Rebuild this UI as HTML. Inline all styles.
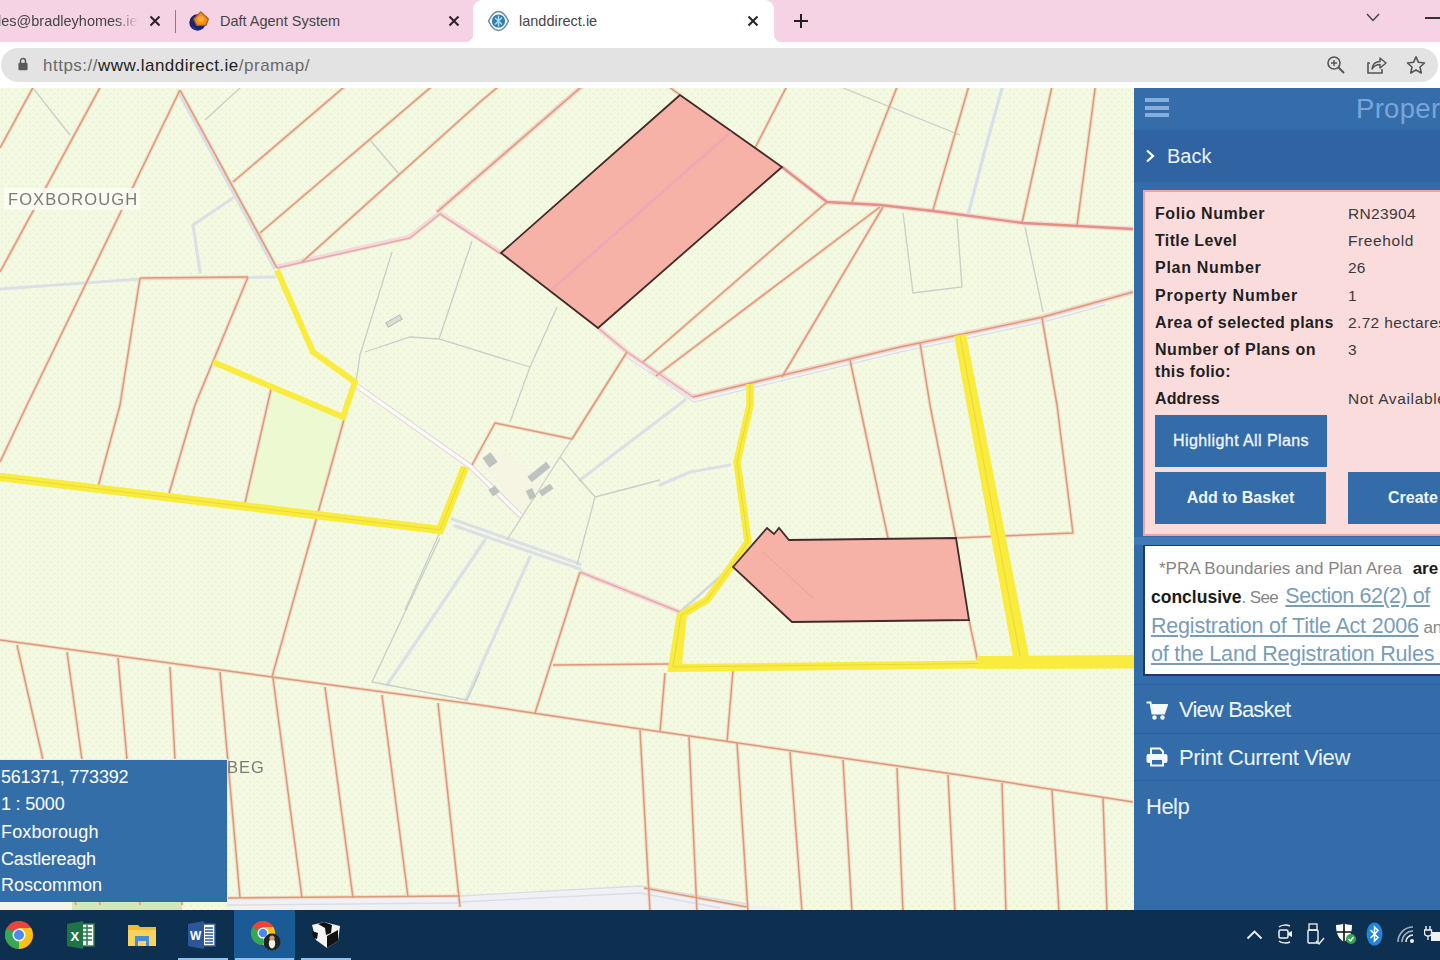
<!DOCTYPE html>
<html lang="en">
<head>
<meta charset="utf-8">
<title>landdirect.ie</title>
<style>
*{box-sizing:border-box}
html,body{margin:0;padding:0}
body{width:1440px;height:960px;overflow:hidden;position:relative;background:#fff;font-family:"Liberation Sans",sans-serif;color:#222}
.abs{position:absolute}
#tabs{left:0;top:0;width:1440px;height:42px;background:#f5d3e4}
#toolbar{left:0;top:42px;width:1440px;height:46px;background:#fff}
#pill{left:1px;top:5.5px;width:1437px;height:34px;border-radius:17px;background:#e3e3e3}
#map{left:0;top:88px;width:1134px;height:822px;overflow:hidden;background:#f4fae1}
#panel{left:1134px;top:88px;width:306px;height:822px;background:#336ca9;overflow:hidden}
#taskbar{left:0;top:910px;width:1440px;height:50px;background:#0e3050}
#info{left:0;top:759px;width:228px;height:143px;background:#346ea9;color:#fff;border-top:1px solid #dff0fb;border-right:1px solid #dff0fb}

.tabt{font-size:14.5px;color:#454545;white-space:nowrap;letter-spacing:0}
.il{position:absolute;left:1px;font-size:18px;letter-spacing:-.2px;white-space:nowrap;color:#fff}
.lab{left:21px;font-weight:bold;font-size:16px;color:#1f1f1f;white-space:nowrap;letter-spacing:.1px}
.val{left:214px;font-size:15.5px;color:#3a3a3a;white-space:nowrap;letter-spacing:.2px;margin-top:.5px}
.btn{background:#336ca9;color:#f2f7ff;font-size:16px;text-align:center;line-height:51px;white-space:nowrap}
.note{color:#858585;white-space:nowrap;font-size:17px}
.note b{color:#1a1a1a}
.lnk{color:#7a9db6;text-decoration:underline;font-size:21.5px;letter-spacing:-.2px}
.menu{font-size:22px;color:#eef4fc;white-space:nowrap;letter-spacing:-.5px}
</style>
</head>
<body>
<div id="tabs" class="abs"><div class="abs" style="left:473px;top:0;width:301px;height:42px;background:#fff;border-radius:9px 9px 0 0"></div>
<div class="abs" style="left:465px;top:34px;width:8px;height:8px;background:radial-gradient(circle at 0 0,#f5d3e4 8px,#fff 8.5px)"></div>
<div class="abs" style="left:774px;top:34px;width:8px;height:8px;background:radial-gradient(circle at 100% 0,#f5d3e4 8px,#fff 8.5px)"></div>
<div class="abs tabt" style="left:-2px;top:12.5px;width:140px;overflow:hidden;white-space:nowrap;-webkit-mask-image:linear-gradient(90deg,#000 118px,transparent 140px)">les@bradleyhomes.ie</div>
<svg class="abs" style="left:149px;top:15px" width="12" height="12" viewBox="0 0 12 12"><path d="M1.5,1.5 L10.5,10.5 M10.5,1.5 L1.5,10.5" stroke="#2e2129" stroke-width="2.1"/></svg>
<div class="abs" style="left:175px;top:10px;width:1px;height:23px;background:#8d7c86"></div>
<svg class="abs" style="left:187px;top:9px" width="24" height="24" viewBox="0 0 24 24"><circle cx="10.5" cy="13.5" r="8.2" fill="#1b256b"/><path d="M4.5,16 A7,7 0 0 0 12,20.5 A9,9 0 0 1 4.5,16z" fill="#4a6ac0"/><polygon points="13.8,2.9 21.3,10 19,16.3 9.6,16.3 6.8,10" fill="#f39015" stroke="#a4601e" stroke-width="1.3" stroke-linejoin="round"/><circle cx="13.9" cy="10.3" r="3" fill="#ffab33"/></svg>
<div class="abs tabt" style="left:220px;top:12.5px">Daft Agent System</div>
<svg class="abs" style="left:448px;top:15px" width="12" height="12" viewBox="0 0 12 12"><path d="M1.5,1.5 L10.5,10.5 M10.5,1.5 L1.5,10.5" stroke="#2e2129" stroke-width="2.1"/></svg>
<svg class="abs" style="left:487px;top:10px" width="23" height="22" viewBox="0 0 23 22"><path d="M1.5,11 Q6,1.5 11.5,1.5 Q17,1.5 21.5,11 Q17,20.5 11.5,20.5 Q6,20.5 1.5,11z" fill="#f2f7f9" stroke="#6f8b95" stroke-width="1.5"/><circle cx="11.5" cy="11" r="6.6" fill="#2f7fa8"/><path d="M8,8 L11.5,11 L15,7.5 M8,14.5 L11.5,11 L15,14.5 M11.5,5.5 V16.5" stroke="#a9d9ef" stroke-width="1.5" fill="none"/></svg>
<div class="abs tabt" style="left:519px;top:12.5px">landdirect.ie</div>
<svg class="abs" style="left:747px;top:15px" width="12" height="12" viewBox="0 0 12 12"><path d="M1.5,1.5 L10.5,10.5 M10.5,1.5 L1.5,10.5" stroke="#2e2129" stroke-width="2.1"/></svg>
<svg class="abs" style="left:793px;top:13px" width="16" height="16" viewBox="0 0 16 16"><path d="M8,1 V15 M1,8 H15" stroke="#222" stroke-width="2"/></svg>
<svg class="abs" style="left:1365px;top:12px" width="16" height="12" viewBox="0 0 16 12"><path d="M2,2 L8,8.5 L14,2" stroke="#444" stroke-width="1.5" fill="none"/></svg>
<div class="abs" style="left:1425px;top:17px;width:15px;height:2px;background:#333"></div>
</div>
<div id="toolbar" class="abs"><div id="pill" class="abs"></div><svg class="abs" style="left:17.5px;top:15px" width="10" height="14" viewBox="0 0 12 16"><rect x="0.5" y="6.5" width="11" height="9" rx="1.5" fill="#5a5a5a"/><path d="M3,7 V4.5 A3,3 0 0 1 9,4.5 V7" stroke="#5a5a5a" stroke-width="1.8" fill="none"/></svg>
<div class="abs" style="left:43px;top:13.5px;font-size:17px;letter-spacing:.5px;color:#6a6a6a;white-space:nowrap">https://<span style="color:#222">www.landdirect.ie</span>/pramap/</div>
<svg class="abs" style="left:1326px;top:13px" width="20" height="20" viewBox="0 0 20 20"><circle cx="8" cy="8" r="6" stroke="#555" stroke-width="1.6" fill="none"/><path d="M12.5,12.5 L18,18" stroke="#555" stroke-width="2"/><path d="M5,8 H11 M8,5 V11" stroke="#555" stroke-width="1.4"/></svg>
<svg class="abs" style="left:1366px;top:13px" width="21" height="20" viewBox="0 0 21 20"><path d="M4,8 H2 V18 H16 V14" stroke="#555" stroke-width="1.6" fill="none"/><path d="M6,14 C6,9 10,6.5 14,6.5 V3 L20,8 L14,13 V9.5 C10,9.5 8,11 6,14z" stroke="#555" stroke-width="1.5" fill="none" stroke-linejoin="round"/></svg>
<svg class="abs" style="left:1406px;top:13px" width="20" height="20" viewBox="0 0 20 20"><path d="M10,1.8 L12.5,7.3 L18.5,8 L14,12 L15.3,18 L10,15 L4.7,18 L6,12 L1.5,8 L7.5,7.3z" stroke="#555" stroke-width="1.6" fill="none" stroke-linejoin="round"/></svg>
</div>
<div id="map" class="abs"><svg width="1134" height="822" viewBox="0 88 1134 822" style="position:absolute;left:0;top:0;filter:blur(.45px)">
<defs>
<pattern id="dots" x="0" y="0" width="7" height="8" patternUnits="userSpaceOnUse">
<rect x="1" y="1" width="2" height="1.5" fill="#e8efd4"/>
<rect x="4.5" y="5" width="2" height="1.5" fill="#e8efd4"/>
</pattern>
</defs>
<rect x="0" y="88" width="1134" height="822" fill="#f4fae1"/>
<rect x="0" y="88" width="1134" height="822" fill="url(#dots)"/>
<polygon points="272,385 343,417 317,512 245,503" fill="#ecf9d1"/>
<!-- bottom road band -->
<polygon points="227,898 460,896 640,886 747,904 830,914 227,914" fill="#f0f1f5"/>
<path d="M460,896 L640,886 L747,904 M460,902 L640,893 L720,908 M227,905 L460,903" stroke="#d8dde6" stroke-width="1.3" fill="none"/><rect x="0" y="902" width="72" height="8" fill="#f3f4ec"/><rect x="72" y="902" width="110" height="8" fill="#d3e6bd"/>
<!-- blue-gray roads / streams -->
<g fill="none" stroke="#dbe0e7" stroke-width="3.2" stroke-linecap="round" stroke-linejoin="round">
<path d="M0,289 L140,279 L275,277"/>
<path d="M233,198 L193,225 L200,272"/>
<path d="M452,519 L580,564"/>
<path d="M455,526 L580,569"/>
<path d="M485,540 L387,685"/>
<path d="M530,557 L480,668 L466,700"/>
<path d="M685,400 L580,480"/>
<path d="M730,465 L690,472 L660,485"/>
<path d="M1002,88 L985,150 L968,215" stroke="#d8dfea"/>
</g>
<!-- thin gray -->
<g fill="none" stroke="#c6cfc9" stroke-width="1.3">
<path d="M33,88 L70,135"/>
<path d="M240,88 L205,120"/>
<path d="M370,140 L400,175"/>
<path d="M392,252 L360,355 L356,382"/>
<path d="M365,352 L410,337 L439,339 L530,367"/>
<path d="M472,241 L439,339"/>
<path d="M903,213 L913,293 L962,287 L957,218"/>
<path d="M1025,227 L1043,312"/>
<path d="M557,307 L530,367 L510,422"/>
<path d="M572,439 L560,457 L507,540"/>
<path d="M560,457 L595,497 L577,565"/>
<path d="M595,497 L660,480"/>
<path d="M440,532 L405,610"/>
<path d="M440,538 L372,682 L467,700 L480,672"/>
<path d="M843,88 L960,135"/>
</g>
<!-- white track -->
<path d="M357,386 L470,466 L520,515" stroke="#e6d2d2" stroke-width="5.5" fill="none" stroke-linecap="round"/>
<path d="M357,386 L470,466 L520,515" stroke="#fbfbfb" stroke-width="3.5" fill="none" stroke-linecap="round"/>
<polygon points="480,462 500,448 545,480 520,512" fill="#f6f3e4" opacity=".8"/>
<!-- buildings -->
<g fill="#bfc3c0">
<rect x="-5" y="-6" width="10" height="12" transform="translate(490,460) rotate(-35)"/>
<rect x="-4" y="-4" width="8" height="8" transform="translate(494,491) rotate(-35)"/>
<rect x="-12" y="-3.5" width="24" height="7" transform="translate(539,472) rotate(-38)"/>
<rect x="-3.5" y="-5" width="7" height="10" transform="translate(531,494) rotate(-25)"/>
<rect x="-7" y="-3" width="14" height="6" transform="translate(546,490) rotate(-35)"/>
<rect x="-8" y="-2.5" width="16" height="5" transform="translate(394,321) rotate(-30)" fill="#d9ddd6" stroke="#b4b9b6" stroke-width="1"/>
</g>
<!-- road casing -->
<g fill="none" stroke-linejoin="round">
<path d="M627,355 L694,400 L900,350 L973,335 L1043,320 L1105,303" stroke="#d9dfe8" stroke-width="5"/>
<path d="M627,355 L694,400 L900,350 L973,335 L1043,320 L1105,303" stroke="#f7f7fa" stroke-width="2.6"/>
</g>
<!-- pink cased roads -->
<g fill="none" stroke="#f3d9da" stroke-width="5" stroke-linejoin="round">
<path d="M178,91 L275,269" stroke="#d8dfe8" stroke-width="3.5"/>
<path d="M277,267 L410,237 L440,213 L501,253"/>
<path d="M598,328 L627,352 L693,397 L900,347 L973,332 L1043,317 L1133,292"/>
<path d="M437,212 L587,82"/>
<path d="M782,167 L827,202 L880,205 L933,211 L1023,223 L1133,229"/>
<path d="M652,370 L693,397"/>
<path d="M580,572 L680,612"/>
<path d="M680,612 L730,568" stroke="#d3d6dc" stroke-width="2.5"/>
</g>
<!-- red parcel lines -->
<defs><g id="rl" fill="none" stroke-linejoin="round">
<path d="M0,148 L36,82"/>
<path d="M0,272 L103,82"/>
<path d="M180,90 L27,405 L0,462"/>
<path d="M140,278 L248,277"/>
<path d="M140,278 L120,405 L98,487"/>
<path d="M248,277 L195,405 L168,497"/>
<path d="M272,385 L245,503"/>
<path d="M345,416 L330,470 L272,677"/>
<path d="M233,182 L350,82"/>
<path d="M260,233 L437,82"/>
<path d="M302,262 L480,102 L504,82"/>
<path d="M437,212 L587,82"/>
<path d="M180,90 L277,268"/>
<path d="M680,95 L668,86"/>
<path d="M755,148 L789,82"/>
<path d="M852,202 L899,82"/>
<path d="M933,210 L970,82"/>
<path d="M1022,223 L1053,82"/>
<path d="M1077,226 L1096,82"/>
<path d="M827,202 L643,362"/>
<path d="M880,207 L656,376"/>
<path d="M883,207 L782,377"/>
<path d="M693,397 L900,347 L973,332 L1043,317 L1133,292"/>
<path d="M627,352 L572,439 L495,423 L472,465"/>
<path d="M850,360 L888,538"/>
<path d="M920,343 L930,405 L956,538"/>
<path d="M969,620 L978,662"/>
<path d="M1042,318 L1057,405 L1073,533 L955,538"/>
<path d="M580,572 L535,713"/>
<path d="M553,665 L670,664"/>
<path d="M0,640 L272,677 L480,705 L613,725 L960,775 L1133,802"/>
<path d="M17,645 L43,760 L76,905"/>
<path d="M67,652 L82,760 L100,905"/>
<path d="M118,658 L127,760 L140,905"/>
<path d="M170,667 L175,760 L182,905"/>
<path d="M220,672 L240,898"/>
<path d="M273,678 L302,898"/>
<path d="M325,687 L353,898"/>
<path d="M382,695 L408,897"/>
<path d="M438,703 L460,907"/>
<path d="M640,730 L650,912"/>
<path d="M689,737 L697,912"/>
<path d="M737,743 L748,912"/>
<path d="M790,752 L802,912"/>
<path d="M843,760 L852,912"/>
<path d="M897,768 L903,912"/>
<path d="M948,775 L955,912"/>
<path d="M1002,783 L1006,912"/>
<path d="M1052,790 L1059,912"/>
<path d="M1103,798 L1107,912"/>
<path d="M665,673 L660,732"/>
<path d="M733,670 L727,742"/>
<path d="M227,898 L460,896"/>
<path d="M644,888 L747,907"/>
</g></defs>
<use href="#rl" stroke="#f1d3c0" stroke-width="3.6" opacity=".75"/>
<use href="#rl" stroke="#dd9a7a" stroke-width="1.5"/>
<path d="M782,167 L827,202 L880,205 L933,211 L1023,223 L1133,229" stroke-width="2.3" stroke="#e4917f" fill="none"/>

<g fill="none" stroke="#e8a9a6" stroke-width="1.5" stroke-linejoin="round">
<path d="M277,268 L410,238 L440,214 L501,254"/>
<path d="M598,328 L627,352 L693,397"/>
<path d="M580,572 L680,612"/>
</g>
<!-- yellow highlights -->
<g fill="none" stroke="#f9ec3e" stroke-linejoin="miter" stroke-linecap="butt">
<path d="M0,477 L440,530 L465,467" stroke-width="8.5"/>
<path d="M277,270 L313,352 L355,382 L343,417 L213,362" stroke-width="6"/>
<path d="M750,384 L750,405 L737,462 L748,542 L730,568 L707,600 L681,615" stroke-width="7.5"/>
<path d="M681,613 L672,668 L978,664.5" stroke-width="8"/>
<path d="M684,614 L679,664" stroke-width="6"/>
<path d="M978,663 L1134,661.7" stroke-width="7"/>
</g>
<polygon points="954,336 966,334 1029,656 1013,656" fill="#f9ec3e"/>
<polygon points="977,656 1134,655 1134,668.5 977,669" fill="#f9ec3e"/>
<g fill="none" stroke="#e4d434" stroke-width="1" opacity=".8">
<path d="M0,477 L440,530 L465,467"/>
<path d="M750,384 L750,405 L737,462 L748,542 L730,568 L707,600 L681,615 L673,667 L978,663.5"/>
<path d="M960,336 L1020,656"/>
</g>
<!-- selected plans -->
<g fill="#f7b2a8" stroke="#452a2a" stroke-width="1.8" stroke-linejoin="miter">
<polygon points="680,95 782,167 598,328 501,253"/>
<polygon points="733,567 767,528 774,534 779,528 789,540 956,538 969,620 792,622"/>
</g>
<path d="M731,132 L551,290" stroke="#eda9b5" stroke-width="2.8" fill="none"/>
<path d="M763,552 L813,598" stroke="#ee9f9a" stroke-width="1" fill="none"/>
<!-- labels -->
<g font-family="'Liberation Sans',sans-serif" fill="#7a7a7a">
<rect x="4" y="188" width="136" height="22" fill="#fbfdf2" opacity=".85"/>
<text x="8" y="205" font-size="16.5" letter-spacing="1.1">FOXBOROUGH</text>
<text x="227" y="773" font-size="16.5" letter-spacing="1">BEG</text>
</g>
</svg>
</div>
<div id="panel" class="abs"><div class="abs" style="left:0;top:0;width:306px;height:42px;background:#356dab"></div>
<div class="abs" style="left:11px;top:10px;width:24px;height:4px;background:#86addb"></div>
<div class="abs" style="left:11px;top:17.5px;width:24px;height:4px;background:#86addb"></div>
<div class="abs" style="left:11px;top:25px;width:24px;height:4px;background:#86addb"></div>
<div class="abs" style="left:222px;top:5px;font-size:27.5px;color:#78a6da;white-space:nowrap;letter-spacing:.3px">Property</div>
<div class="abs" style="left:0;top:42px;width:306px;height:52px;background:#2f63a1"></div>
<svg class="abs" style="left:11px;top:61px" width="10" height="14" viewBox="0 0 10 14"><path d="M2,1.5 L8,7 L2,12.5" stroke="#fff" stroke-width="2.2" fill="none"/></svg>
<div class="abs" style="left:33px;top:57px;font-size:20px;color:#eef4fc;letter-spacing:0">Back</div>
<!-- pink details box -->
<div class="abs" style="left:9px;top:102px;width:310px;height:346px;background:#fbdcdd;border:2px solid #f0a3a6"></div>
<div class="abs lab" style="top:116.5px;letter-spacing:0.57px">Folio Number</div><div class="abs val" style="top:116.5px;letter-spacing:0.36px">RN23904</div>
<div class="abs lab" style="top:143.5px;letter-spacing:0.37px">Title Level</div><div class="abs val" style="top:143.5px;letter-spacing:0.60px">Freehold</div>
<div class="abs lab" style="top:170.5px;letter-spacing:0.71px">Plan Number</div><div class="abs val" style="top:170.5px">26</div>
<div class="abs lab" style="top:198.5px;letter-spacing:0.82px">Property Number</div><div class="abs val" style="top:198.5px">1</div>
<div class="abs lab" style="top:225.5px;letter-spacing:0.41px">Area of selected plans</div><div class="abs val" style="top:225.5px;letter-spacing:0.35px">2.72 hectares</div>
<div class="abs lab" style="top:252.5px;letter-spacing:0.55px">Number of Plans on</div><div class="abs val" style="top:252.5px">3</div>
<div class="abs lab" style="top:274.5px;letter-spacing:0.36px">this folio:</div>
<div class="abs lab" style="top:301.5px;letter-spacing:0.09px">Address</div><div class="abs val" style="top:301.5px;letter-spacing:0.64px">Not Available</div>
<div class="abs btn" style="left:21px;top:327px;width:172px;height:52px;letter-spacing:.42px;-webkit-text-stroke:.3px #f2f7ff">Highlight All Plans</div>
<div class="abs btn" style="left:21px;top:384px;width:171px;height:52px;font-weight:bold">Add to Basket</div>
<div class="abs btn" style="left:214px;top:384px;width:171px;height:52px;font-weight:bold;text-align:left;padding-left:40px">Create</div>
<!-- white note box -->
<div class="abs" style="left:0;top:449px;width:306px;height:8px;background:#4179b6"></div>
<div class="abs" style="left:9px;top:457px;width:310px;height:131px;background:#fff;border:2px solid #1d3a66;border-top-width:1.5px"></div>
<div class="abs note" style="left:25px;top:471px;font-size:17px">*PRA Boundaries and Plan Area <b style="margin-left:6px">are</b></div>
<div class="abs note" style="left:17px;top:496px;font-size:17px"><b style="font-size:17.5px">conclusive</b><span style="letter-spacing:-.6px">. See </span><span style="margin-left:3px"></span><span class="lnk" style="letter-spacing:-.45px">Section 62(2) of</span></div>
<div class="abs note" style="left:17px;top:526px"><span class="lnk">Registration of Title Act 2006</span> and</div>
<div class="abs note" style="left:17px;top:554px"><span class="lnk">of the Land Registration Rules 2012</span></div>
<!-- menu rows -->
<div class="abs" style="left:0;top:596px;width:306px;height:1px;background:#2d5f9b"></div>
<div class="abs" style="left:0;top:645px;width:306px;height:1px;background:#2d5f9b"></div>
<div class="abs" style="left:0;top:692px;width:306px;height:1px;background:#2d5f9b"></div>
<svg class="abs" style="left:12px;top:613px" width="22" height="20" viewBox="0 0 22 20"><path d="M0.5,1.5 H4.5 L6.5,12.5 H18 L21,4 H6" stroke="#f4f8ff" stroke-width="2" fill="none"/><path d="M5.5,4 H20.5 L18,12 H7z" fill="#f4f8ff"/><circle cx="8.5" cy="16.5" r="2.2" fill="#f4f8ff"/><circle cx="16.5" cy="16.5" r="2.2" fill="#f4f8ff"/></svg>
<div class="abs menu" style="left:45px;top:609px;letter-spacing:-.85px">View Basket</div>
<svg class="abs" style="left:12px;top:659px" width="22" height="20" viewBox="0 0 22 20"><path d="M5,7 V1.5 H14 L17,4.5 V7" stroke="#f4f8ff" stroke-width="2" fill="none"/><rect x="0.5" y="7" width="21" height="9" rx="2" fill="#f4f8ff"/><rect x="5" y="12" width="12" height="6.5" fill="#336ca9" stroke="#f4f8ff" stroke-width="2"/></svg>
<div class="abs menu" style="left:45px;top:657px;letter-spacing:-.4px">Print Current View</div>
<div class="abs menu" style="left:12px;top:706px">Help</div>
</div>
<div id="info" class="abs"><div class="il" style="top:7px">561371, 773392</div>
<div class="il" style="top:34px">1 : 5000</div>
<div class="il" style="top:61.5px;letter-spacing:.15px">Foxborough</div>
<div class="il" style="top:88.5px">Castlereagh</div>
<div class="il" style="top:115px;letter-spacing:0">Roscommon</div>
</div>
<div id="taskbar" class="abs"><div class="abs" style="left:234px;top:0;width:61px;height:50px;background:#1b5b95"></div>
<div class="abs" style="left:178px;top:48px;width:50px;height:2px;background:#8fc2ee"></div>
<div class="abs" style="left:235px;top:48px;width:59px;height:2px;background:#8fc2ee"></div>
<div class="abs" style="left:301px;top:48px;width:50px;height:2px;background:#8fc2ee"></div>
<!-- chrome -->
<svg class="abs" style="left:4px;top:10px" width="30" height="30" viewBox="0 0 30 30"><circle cx="15" cy="15" r="14" fill="#e8453c"/><path d="M15,15 L2.9,8 A14,14 0 0 0 15,29 L21,18.5z" fill="#35a853"/><path d="M15,15 L15,29 A14,14 0 0 0 27.1,8 L15,8z" fill="#fbc116"/><path d="M2.9,8 A14,14 0 0 1 27.1,8 L15,8z" fill="#e8453c"/><circle cx="15" cy="15" r="6.5" fill="#fff"/><circle cx="15" cy="15" r="5" fill="#4a8af4"/></svg>
<!-- excel -->
<svg class="abs" style="left:66px;top:11px" width="30" height="28" viewBox="0 0 30 28"><rect x="12" y="3" width="16" height="22" fill="#fff" stroke="#2a7a4b" stroke-width="1.5"/><path d="M16,7 H26 M16,11 H26 M16,15 H26 M16,19 H26 M21,4 V24" stroke="#2a7a4b" stroke-width="1.5"/><path d="M1,3 L17,0 V28 L1,25z" fill="#1f7346"/><text x="4.5" y="19.5" font-family="'Liberation Sans',sans-serif" font-weight="bold" font-size="13" fill="#fff">X</text></svg>
<!-- folder -->
<svg class="abs" style="left:127px;top:12px" width="30" height="26" viewBox="0 0 30 26"><path d="M1,3 H11 L13,5 H29 V24 H1z" fill="#f0b93a"/><rect x="1" y="8" width="28" height="16" fill="#fad35e"/><rect x="8" y="14" width="14" height="10" fill="#3f8ed6"/><rect x="11" y="19" width="8" height="5" fill="#fad35e"/></svg>
<!-- word -->
<svg class="abs" style="left:187px;top:11px" width="30" height="28" viewBox="0 0 30 28"><rect x="12" y="3" width="16" height="22" fill="#fff" stroke="#2b579a" stroke-width="1.5"/><path d="M18,7 H26 M18,10 H26 M18,13 H26 M18,16 H26 M18,19 H26 M18,22 H26" stroke="#2b579a" stroke-width="1.3"/><path d="M1,3 L17,0 V28 L1,25z" fill="#2b579a"/><text x="3" y="19" font-family="'Liberation Sans',sans-serif" font-weight="bold" font-size="12" fill="#fff">W</text></svg>
<!-- chrome active -->
<svg class="abs" style="left:250px;top:10px" width="32" height="32" viewBox="0 0 32 32"><circle cx="13" cy="13" r="12" fill="#e8453c"/><path d="M13,13 L2.6,7 A12,12 0 0 0 13,25 L18,16z" fill="#35a853"/><path d="M13,13 L13,25 A12,12 0 0 0 23.4,7 L13,7z" fill="#fbc116"/><path d="M2.6,7 A12,12 0 0 1 23.4,7 L13,7z" fill="#e8453c"/><circle cx="13" cy="13" r="5.5" fill="#fff"/><circle cx="13" cy="13" r="4.2" fill="#4a8af4"/><circle cx="22" cy="22" r="8.5" fill="#222"/><ellipse cx="22" cy="23.5" rx="3.2" ry="5" fill="#f2efe6"/><circle cx="22" cy="18" r="2.6" fill="#c9a27a"/></svg>
<!-- cube-ish -->
<svg class="abs" style="left:310px;top:11px" width="32" height="28" viewBox="0 0 32 28"><path d="M2,4 L14,1 L30,5 L28,20 L17,27 L6,19z" fill="#f4f4f4"/><path d="M8,3 L14,1 L22,4 L15,7z M15,7 L22,4 L21,12 L16,14z M2,10 L8,12 L7,18 L3,16z M17,15 L28,9 L28,20 L17,27z" fill="#111"/></svg>
<!-- tray -->
<svg class="abs" style="left:1246px;top:19px" width="17" height="11" viewBox="0 0 17 11"><path d="M1.5,9.5 L8.5,2.5 L15.5,9.5" stroke="#f2f2f2" stroke-width="1.8" fill="none"/></svg>
<svg class="abs" style="left:1276px;top:12px" width="18" height="24" viewBox="0 0 18 24"><rect x="3" y="8" width="9" height="8" rx="1.5" stroke="#f2f2f2" stroke-width="1.5" fill="none"/><path d="M12,11 L16,9 V15 L12,13z" fill="#f2f2f2"/><path d="M3,5 A8,5 0 0 1 14,4 M3,19 A8,5 0 0 0 14,20" stroke="#f2f2f2" stroke-width="1.4" fill="none"/></svg>
<svg class="abs" style="left:1306px;top:12px" width="20" height="24" viewBox="0 0 20 24"><rect x="3" y="2" width="8" height="6" stroke="#f2f2f2" stroke-width="1.3" fill="none"/><rect x="2" y="8" width="10" height="13" rx="1" stroke="#f2f2f2" stroke-width="1.4" fill="none"/><path d="M10,19 L13,22 L18,16" stroke="#f2f2f2" stroke-width="1.4" fill="none"/></svg>
<svg class="abs" style="left:1334px;top:12px" width="24" height="24" viewBox="0 0 24 24"><path d="M2,3 C6,3 9,2 10,1 C11,2 14,3 18,3 C18,12 15,17 10,20 C5,17 2,12 2,3z" fill="#fff"/><path d="M10,1 V20 M2.5,10 H17.5" stroke="#111" stroke-width="1.6"/><circle cx="17" cy="17" r="5" fill="#2ea84a"/><path d="M14.5,17 L16.5,19 L19.5,15" stroke="#fff" stroke-width="1.4" fill="none"/></svg>
<svg class="abs" style="left:1366px;top:12px" width="17" height="24" viewBox="0 0 17 24"><ellipse cx="8.5" cy="12" rx="8" ry="11.5" fill="#1f86e0"/><path d="M4.5,8 L12,15.5 L8.5,19 V5 L12,8.5 L4.5,16" stroke="#fff" stroke-width="1.5" fill="none"/></svg>
<svg class="abs" style="left:1397px;top:14px" width="20" height="20" viewBox="0 0 20 20"><circle cx="15" cy="17" r="2" fill="#f2f2f2"/><path d="M9,18 A7,7 0 0 1 16,11" stroke="#f2f2f2" stroke-width="1.6" fill="none"/><path d="M5,18 A11,11 0 0 1 16,7" stroke="#9fb0c0" stroke-width="1.6" fill="none"/><path d="M1,18 A15,15 0 0 1 16,3" stroke="#9fb0c0" stroke-width="1.6" fill="none"/></svg>
<svg class="abs" style="left:1424px;top:15px" width="16" height="20" viewBox="0 0 16 20"><path d="M2,1 V5 M6,1 V5" stroke="#f2f2f2" stroke-width="1.4"/><path d="M0.5,5 H7.5 V8 C7.5,10 6,11 4,11 C2,11 0.5,10 0.5,8z" stroke="#f2f2f2" stroke-width="1.3" fill="none"/><path d="M4,11 V15" stroke="#f2f2f2" stroke-width="1.3"/><rect x="7" y="7" width="10" height="9" fill="#f2f2f2"/></svg>
</div>
</body>
</html>
